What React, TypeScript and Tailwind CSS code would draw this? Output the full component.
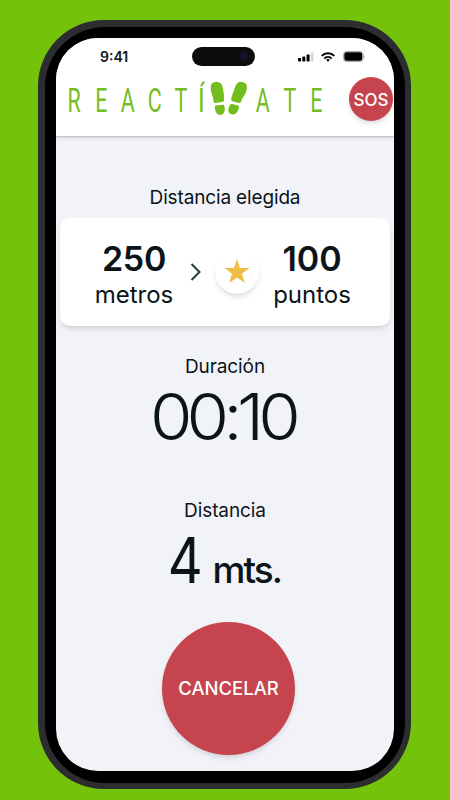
import React from 'react';

const Letter = ({ children }: { children: string }) => (
  <span className="w-[26.7px] flex justify-center">
    <span className="inline-block scale-x-[0.65]">{children}</span>
  </span>
);

const Footprints = () => (
  <svg width="40" height="38" viewBox="0 0 40 38" fill="#73be1e" className="shrink-0 -mt-[2px]">
    <path d="M3.200 15C1.500 10 .5 4 4.500 2.400C9 .5 12.800 2.500 13.700 7.500C14.500 12 15.500 16 15 20.500C14.900 21.500 14 21.800 13 22L6.500 23C5 23.200 4.600 22 4.500 21C4.300 19 3.900 17 3.200 15Z" />
    <path d="M5.800 26.800C5.800 26 6.300 25.700 7 25.600L13.500 24.800C14.500 24.700 15 25.100 15.300 26C16.500 30 15.500 34 12 34.900C8 35.500 5.800 31.500 5.800 26.800Z" />
    <path d="M36.600 13C38.500 8.500 38.800 4.200 35 2.400C31 .700 27.800 2 26.300 6.500C25 11 23 14.500 22.200 19C22 20.300 22.500 21 23.500 21.300L30 23C31.200 23.300 31.700 22.600 32 21.500C33 18.500 35.200 16 36.600 13Z" />
    <path d="M30 27C30.200 26.200 29.800 25.600 29 25.400L23 24C22 23.800 21.300 24.300 20.800 25.200C18.500 29.500 18.800 33 22.500 34.300C27 35.400 29.300 31.500 30 27Z" />
  </svg>
);

const StatusBar = () => (
  <div className="flex items-center h-[37px] pl-[44px] pr-[31px]">
    <span className="text-[14px] font-semibold leading-none">9:41</span>
    <div className="ml-[64px] w-[63px] h-[19px] rounded-full bg-[#0c0c0c] flex items-center justify-end pr-[7px] shrink-0">
      <div className="w-[9px] h-[9px] rounded-full bg-[#14122a]"></div>
    </div>
    <svg className="ml-auto" width="16" height="10" viewBox="0 0 16 10">
      <rect x="0" y="6" width="3" height="3.500" rx=".7" />
      <rect x="4.300" y="4.500" width="3" height="5" rx=".7" />
      <rect x="8.600" y="2.500" width="3" height="7" rx=".7" />
      <rect x="12.900" y="0.500" width="2.600" height="9" rx=".7" fill="#d5d5d5" />
    </svg>
    <svg className="ml-[7px]" width="14" height="10" viewBox="0 0 14 10" fill="none" stroke="#000" strokeWidth="2">
      <path d="M.7 3.900C4.200.400 9.800.400 13.300 3.900" />
      <path d="M3.300 6.400C5.400 4.500 8.600 4.500 10.700 6.400" />
      <path d="M5 7.600Q7 6.200 9 7.600L7 9.800Z" fill="#000" stroke="none" />
    </svg>
    <svg className="ml-[8px] -mr-[2px] shrink-0" width="22" height="11" viewBox="0 0 22 11">
      <rect x=".5" y=".5" width="19.500" height="10" rx="3" fill="#fff" stroke="#a5a5a5" />
      <rect x="1.300" y="1.300" width="17.900" height="8.400" rx="2.200" />
      <path d="M20.700 3.500Q22 5.500 20.700 7.500Z" fill="#777" />
    </svg>
  </div>
);

const Header = () => (
  <div className="h-[98.500px] bg-white border-b border-[#c4c6ca] shadow-sm shrink-0">
    <StatusBar />
    <div className="flex items-center h-[48px] pl-[5px] pr-px">
      <div className="flex items-center font-['Roboto',sans-serif] text-[33px] leading-none text-[#73be1e] pt-[2px]">
        <Letter>R</Letter>
        <Letter>E</Letter>
        <Letter>A</Letter>
        <Letter>C</Letter>
        <Letter>T</Letter>
        <span className="w-[15px] flex justify-center">
          <span className="inline-block scale-x-[0.75]">Í</span>
        </span>
        <Footprints />
        <Letter>A</Letter>
        <Letter>T</Letter>
        <Letter>E</Letter>
      </div>
      <button className="ml-auto w-[44px] h-[44px] pt-[3px] rounded-full bg-[#c5444d] text-white text-[17px] font-medium shadow-md shrink-0">
        SOS
      </button>
    </div>
  </div>
);

const Summary = () => (
  <div className="w-[330px] h-[108px] bg-white rounded-[10px] shadow-md flex items-center shrink-0 mt-[7px] ml-[4px]">
    <div className="w-[120px] ml-[14px] pt-[11px] text-center">
      <p className="text-[34px] leading-[36px] font-semibold tracking-[-0.3px]">250</p>
      <p className="text-[24px] leading-[36px]">metros</p>
    </div>
    <svg width="12" height="18" viewBox="0 0 12 18" fill="none" stroke="#243840" strokeWidth="2" className="shrink-0 -ml-[4px]">
      <path d="M1.500 1L9.500 9L1.500 17" />
    </svg>
    <div className="ml-[13px] w-[44px] h-[44px] rounded-full bg-white shadow-md flex items-center justify-center shrink-0">
      <svg width="26" height="25" viewBox="0 0 26 25" fill="#eebf42">
        <path d="M13 0L16.200 9H25.500L18 14.700L20.800 24L13 18.500L5.200 24L8 14.700L.5 9H9.800Z" />
      </svg>
    </div>
    <div className="w-[106px] pt-[11px] text-center">
      <p className="text-[34px] leading-[36px] font-semibold">100</p>
      <p className="text-[24px] leading-[36px]">puntos</p>
    </div>
  </div>
);

export default function App() {
  return (
    <div className="w-[450px] h-[800px] bg-[#75c20b] pt-[20px] pl-[38px] overflow-hidden font-['Inter',sans-serif]">
      <div className="w-[373px] h-[769px] rounded-[66px] bg-[#2c2d31] p-[6.500px]">
        <div className="w-full h-full rounded-[60px] bg-black p-[11.500px]">
          <div className="w-[338px] h-[733px] rounded-[42px] bg-[#f2f3f8] overflow-hidden flex flex-col text-[#0b1418]">
            <Header />
            <p className="mt-[48px] text-center text-[19px] leading-[26px] tracking-[-0.15px]">Distancia elegida</p>
            <Summary />
            <p className="mt-[28px] text-center text-[19px] leading-[26px] tracking-[-0.1px]">Duración</p>
            <p className="mt-[4px] h-[66px] pr-[5px] text-center text-[65px] leading-[66px] font-light">
              <span className="inline-block scale-x-[1.06] tracking-[-5.500px]">00:10</span>
            </p>
            <p className="mt-[48px] text-center text-[19px] leading-[26px] tracking-[-0.1px]">Distancia</p>
            <p className="mt-[3px] h-[66px] pr-[7px] flex items-baseline justify-center leading-[66px]">
              <span className="inline-block origin-right scale-x-[0.86] text-[63px]">4</span>
              <span className="ml-[10px] text-[37px] font-medium tracking-[-1.900px]">mts.</span>
            </p>
            <button className="mt-[29px] ml-[106px] w-[133px] h-[133px] pt-px rounded-full bg-[#c5444d] text-white text-[18.500px] font-medium shadow-md shrink-0">
              CANCELAR
            </button>
          </div>
        </div>
      </div>
    </div>
  );
}
